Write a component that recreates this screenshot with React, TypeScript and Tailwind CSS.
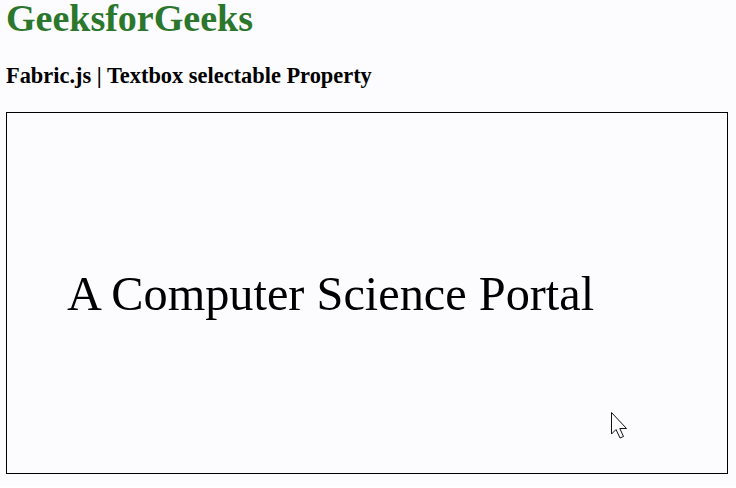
export default function App() {
  return (
    <div
      className="min-h-[488px] w-[736px] bg-[#fcfcff] px-[6px] text-black"
      style={{ fontFamily: '"Liberation Serif", "Times New Roman", serif' }}
    >
      <h1 className="-mt-[2px] mb-0 text-[38px] font-bold leading-[40px] text-[#2b772b]">GeeksforGeeks</h1>
      <h3 className="mt-[26px] text-[22.4px] font-bold leading-[24px]">
        Fabric.js | Textbox selectable Property
      </h3>
      <div className="mt-[24px] h-[362px] w-[722px] border border-black">
        <div className="flex h-full flex-col">
          <div className="h-[156px]" />
          <div className="pl-[60px] text-[48.3px] leading-[50px]">A Computer Science Portal</div>
          <div className="relative flex-1">
            <svg
              className="absolute left-[603px] top-[92px]"
              width="20"
              height="30"
              viewBox="0 0 20 30"
            >
              <path
                d="M1.5 1.5 L1.5 23 L6 18.5 L10 27 L13.5 25.5 L9.8 17.5 L16.5 17.5 Z"
                fill="#fcfcff"
                stroke="#111"
                strokeWidth="1"
                strokeLinejoin="miter"
              />
            </svg>
          </div>
        </div>
      </div>
    </div>
  )
}
